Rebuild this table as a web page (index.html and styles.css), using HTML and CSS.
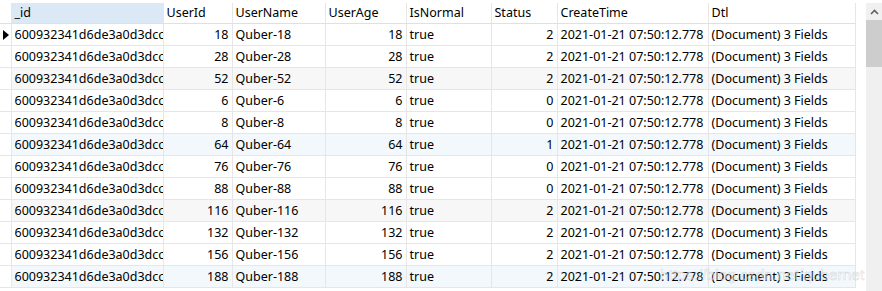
FILE: index.html
```html
<!DOCTYPE html>
<html>

<head>
    <title>Collection Grid</title>
    <link rel="stylesheet" href="styles.css">
</head>

<body>
    <div class="grid-view">
        <div class="grid-wrap">
            <table class="grid">
                <colgroup>
                    <col class="c-ind">
                    <col class="c-id">
                    <col class="c-userid">
                    <col class="c-name">
                    <col class="c-age">
                    <col class="c-normal">
                    <col class="c-status">
                    <col class="c-time">
                    <col class="c-dtl">
                </colgroup>
                <thead>
                    <tr>
                        <th class="ind"></th>
                        <th class="sorted">_id</th>
                        <th>UserId</th>
                        <th>UserName</th>
                        <th>UserAge</th>
                        <th>IsNormal</th>
                        <th>Status</th>
                        <th>CreateTime</th>
                        <th>Dtl</th>
                    </tr>
                </thead>
                <tbody id="rows"></tbody>
            </table>
        </div>
        <div class="scrollbar">
            <div class="sb-btn">
                <svg width="9" height="6" viewBox="0 0 9 6"><path d="M1 5 L4.5 1.5 L8 5" fill="none" stroke="#606060" stroke-width="1.6"/></svg>
            </div>
            <div class="sb-thumb"></div>
        </div>
        <div class="watermark">https://blog.csdn.net/qubernet</div>
    </div>

    <script>
        const data = [
            [18, 2, ''], [28, 2, ''], [52, 2, 'alt'], [6, 0, ''], [8, 0, ''], [64, 1, 'hl'],
            [76, 0, ''], [88, 0, ''], [116, 2, 'alt'], [132, 2, ''], [156, 2, ''], [188, 2, 'hl']
        ];
        const body = document.getElementById('rows');
        body.innerHTML = data.map((r, i) => `
            <tr class="${r[2]}">
                <td class="ind">${i === 0 ? '<span class="cursor"></span>' : ''}</td>
                <td class="clip">600932341d6de3a0d3dcc</td>
                <td class="num">${r[0]}</td>
                <td>Quber-${r[0]}</td>
                <td class="num">${r[0]}</td>
                <td>true</td>
                <td class="num">${r[1]}</td>
                <td>2021-01-21 07:50:12.778</td>
                <td>(Document) 3 Fields</td>
            </tr>`).join('');
    </script>
</body>

</html>
```

FILE: styles.css
```css
body {
    margin: 0;
    background: #fff;
    font-family: "Noto Sans", "Noto Sans CJK SC", sans-serif;
    font-size: 12.5px;
    color: #000;
}

.grid-view {
    position: relative;
    display: flex;
    gap: 11px;
    width: 882px;
    height: 291px;
    padding-top: 3px;
    box-sizing: border-box;
    overflow: hidden;
}

.grid-wrap {
    width: 855px;
}

.grid {
    table-layout: fixed;
    border-collapse: collapse;
    width: 855px;
}

.c-ind { width: 11px; }
.c-id { width: 152px; }
.c-userid { width: 69px; }
.c-name { width: 93px; }
.c-age { width: 81px; }
.c-normal { width: 85px; }
.c-status { width: 66px; }
.c-time { width: 151px; }
.c-dtl { width: 147px; }

th,
td {
    height: 21px;
    padding: 0 3px;
    border: 1px solid #e6e6e6;
    white-space: nowrap;
    overflow: hidden;
    text-align: left;
    font-weight: normal;
    line-height: 20px;
}

th {
    height: 20px;
    border-top: none;
    border-bottom-color: #e0e0e0;
}

th.sorted {
    background: #dbe9f7;
}

th.ind,
td.ind {
    padding: 0;
    border-left: none;
}

td.clip {
    text-overflow: clip;
}

td.num {
    text-align: right;
}

tr.alt td {
    background: #f7f7f7;
}

tr.hl td {
    background: #f3f8fd;
}

tr.alt td.ind,
tr.hl td.ind {
    background: #fff;
}

.cursor {
    display: block;
    width: 0;
    height: 0;
    margin-left: 3px;
    border-top: 5px solid transparent;
    border-bottom: 5px solid transparent;
    border-left: 6px solid #000;
}

.watermark {
    position: absolute;
    left: 660px;
    top: 265px;
    white-space: nowrap;
    font-family: "Liberation Sans", sans-serif;
    font-size: 15.5px;
    line-height: 20px;
    color: rgba(255, 255, 255, 0.5);
    -webkit-text-stroke: 0.5px rgba(170, 170, 170, 0.45);
    pointer-events: none;
}

.scrollbar {
    width: 16px;
    background: #f0f0f0;
    display: flex;
    flex-direction: column;
}

.sb-btn {
    height: 17px;
    display: flex;
    align-items: center;
    justify-content: center;
}

.sb-thumb {
    height: 47px;
    background: #cdcdcd;
}
```
